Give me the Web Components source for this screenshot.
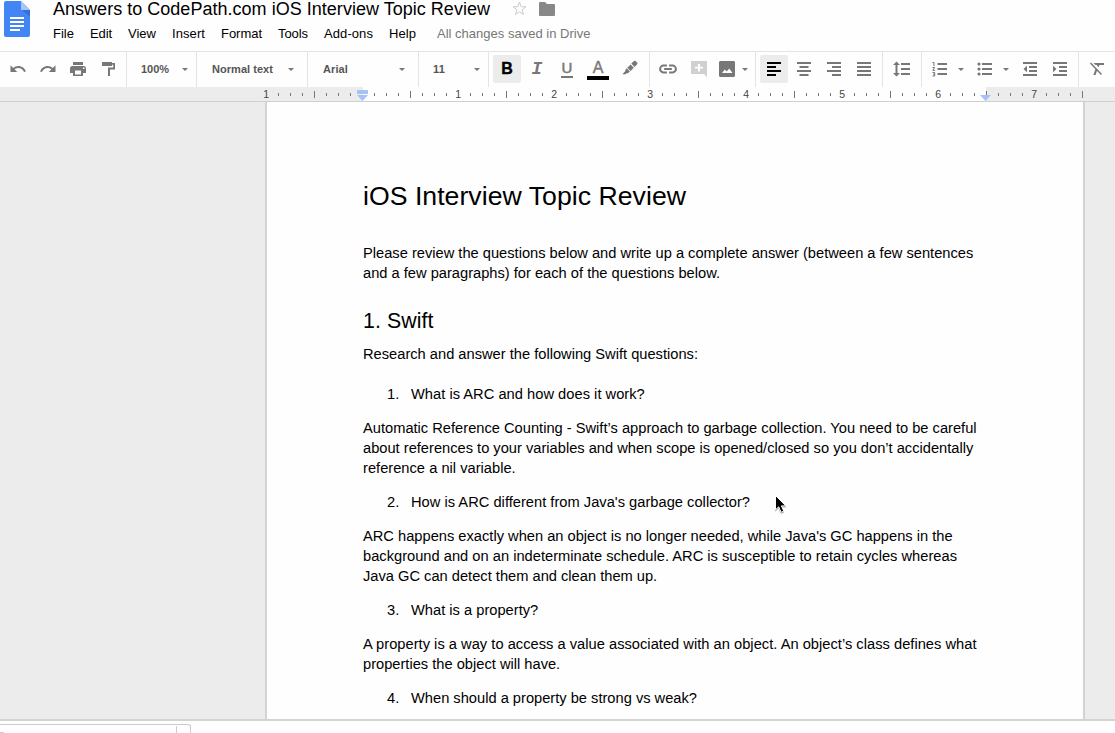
<!DOCTYPE html>
<html lang="en">
<head>
<meta charset="utf-8">
<title>Answers to CodePath.com iOS Interview Topic Review</title>
<style>
html,body{margin:0;height:100%;overflow:hidden;background:#fefefe}
body{font-family:"Liberation Sans",Arial,sans-serif;color:#000}
</style>
</head>
<body>
<docs-app></docs-app>
<script>
const make = (name, html, setup) => customElements.define(name, class extends HTMLElement {
  connectedCallback() {
    if (this.shadowRoot) return;
    const t = document.createElement('template');
    t.innerHTML = typeof html === 'function' ? html(this) : html;
    this.attachShadow({mode: 'open'}).appendChild(t.content.cloneNode(true));
    if (setup) setup(this);
  }
});

/* A single line of text, tracked so that it spans the width in its w attribute. */
make('fit-text', '<style>:host{display:block;white-space:nowrap}span{display:inline-block}</style><span><slot></slot></span>', el => {
  const s = el.shadowRoot.querySelector('span'), w = +el.getAttribute('w');
  if (!w) return;
  const now = s.getBoundingClientRect().width;
  s.style.letterSpacing = (w - now) / el.textContent.length + 'px';
});

const glyphs = {
  undo: [24, 18, '<path d="M12.5 8c-2.65 0-5.05.99-6.9 2.6L2 7v9h9l-3.62-3.62c1.39-1.16 3.16-1.88 5.12-1.88 3.54 0 6.55 2.31 7.6 5.5l2.37-.78C21.08 11.03 17.15 8 12.5 8z"/>'],
  redo: [24, 18, '<path d="M18.4 10.6C16.55 8.99 14.15 8 11.5 8c-4.65 0-8.58 3.03-9.96 7.22L3.9 16c1.05-3.19 4.05-5.5 7.6-5.5 1.95 0 3.73.72 5.12 1.88L13 16h9V7l-3.6 3.6z"/>'],
  print: [18, 18, '<path d="M4 2h10v3H4zM3.500 6h11A2.500 2.500 0 0 1 17 8.500V13h-3v3H4v-3H1V8.500A2.500 2.500 0 0 1 3.500 6zM6 10.500V14.500h6v-4zM14 7.500v1.500h1.500V7.500z" fill-rule="evenodd"/>'],
  paint: [18, 18, '<path d="M3 2h10v1h3v6.500h-5V16H9V7.500h5.200V4.800H13V6H3z"/>'],
  link: [18, 18, '<path d="M8 5.900H4.900a3.100 3.100 0 0 0 0 6.200H8M10 5.900h3.100a3.100 3.100 0 0 1 0 6.200H10M5.500 9h7" fill="none" stroke="currentColor" stroke-width="1.800"/>'],
  marker: [18, 18, '<path d="M10.300 3.600L13 1q.8-.7 1.600 0l1.600 1.700q.6.800 0 1.500l-2.700 2.700zM9.600 4.400l3.200 3.300-3.300 3.300-3.200-3.300zM5.700 8.300l3.200 3.200-2 1.800H5.500l-.9.900H1.400l3-3.100V9.700z"/>'],
  comment: [18, 18, '<path fill-rule="evenodd" d="M1 1h16v16l-3-3H1zM8 4v2.700H5v1.800h3v3h2v-3h3V6.700h-3V4z"/>'],
  image: [18, 18, '<path fill-rule="evenodd" d="M2 1h14l1 1v14l-1 1H2l-1-1V2zM4 13h10.500l-3.300-4.500-2.500 3-1.900-2.100z"/>'],
  left: [18, 18, '<path d="M2 2h14v2H2zM2 6h9v2H2zM2 10h14v2H2zM2 14h9v2H2z"/>'],
  center: [18, 18, '<path d="M2 2h14v2H2zM4.500 6h9v2h-9zM2 10h14v2H2zM4.500 14h9v2h-9z"/>'],
  right: [18, 18, '<path d="M2 2h14v2H2zM7 6h9v2H7zM2 10h14v2H2zM7 14h9v2H7z"/>'],
  justify: [18, 18, '<path d="M2 2h14v2H2zM2 6h14v2H2zM2 10h14v2H2zM2 14h14v2H2z"/>'],
  spacing: [18, 18, '<path d="M8 3h9v2H8zM8 8h9v2H8zM8 13h9v2H8zM3.500 1.500L7 5H4.500v8H7l-3.500 3.500L0 13h2.500V5H0z"/>'],
  ordered: [18, 18, '<path d="M6.500 3H16v2H6.500zM6.500 8H16v2H6.500zM6.500 13H16v2H6.500z"/><path d="M1.500 2.500H3V6M1.500 7.500h2.200L1.800 10.400h2.400M1.500 12.500h2.200v3.500H1.500M2 14.200h1.700" fill="none" stroke="currentColor"/>'],
  bullets: [18, 18, '<path d="M7 3h10v2H7zM7 8h10v2H7zM7 13h10v2H7z"/><circle cx="4" cy="4" r="1.600"/><circle cx="4" cy="9" r="1.600"/><circle cx="4" cy="14" r="1.600"/>'],
  outdent: [18, 18, '<path d="M2 2h14v2H2zM8 6h8v2H8zM8 10h8v2H8zM2 14h14v2H2zM6 5.700v6.600L2.500 9z"/>'],
  indent: [18, 18, '<path d="M2 2h14v2H2zM8 6h8v2H8zM8 10h8v2H8zM2 14h14v2H2zM2 5.700v6.600L5.500 9z"/>'],
  clear: [18, 18, '<path d="M5.500 3H16v2h-4.500l-1 2.200L9 5.700l.3-.7H7.500zM7.700 8.500l1.600 1.600L7.500 15H5.300z"/><path d="M2.500 3l11 11.500" fill="none" stroke="currentColor" stroke-width="1.500"/>']
};
make('tb-icon', el => {
  const [box, size, body] = glyphs[el.getAttribute('name')];
  return `<style>:host{display:block;width:${size}px;height:${size}px}svg{display:block}</style><svg width="${size}" height="${size}" viewBox="0 0 ${box} ${box}" fill="currentColor">${body}</svg>`;
});
make('tb-arrow', '<style>:host{display:block;width:6px;height:3px;margin-top:1px;background:#777;clip-path:polygon(0 0,100% 0,50% 100%)}</style>');
make('tb-button', `<style>
:host{display:flex;align-items:center;justify-content:center;width:28px;height:28px;margin:0 1px;border-radius:2px;color:#777;flex:none;box-sizing:border-box}
:host([on]){background:#ececec;color:#000}:host([faint]){color:#d0d0d0}</style><slot></slot>`);
make('tb-group', `<style>
:host{display:flex;align-items:center;height:35px;padding-bottom:1px;box-sizing:border-box;border-right:1px solid #e4e4e4;flex:none}</style><slot></slot>`);
make('tb-select', `<style>
:host{display:flex;align-items:center;justify-content:space-between;flex:1;font-size:11px;font-weight:bold;color:#555}</style><slot></slot><tb-arrow></tb-arrow>`);

make('docs-toolbar', `<style>
:host{display:flex;border-top:1px solid #e4e4e4;height:35px;background:#fefefe}
tb-select{padding:0 8px 0 14px}
.i{font:italic bold 18px/20px "Liberation Mono",monospace}
.b{font:bold 16px "Liberation Sans",sans-serif;-webkit-text-stroke:.4px}
.u{font-size:15px;border-bottom:2px solid;line-height:14px;padding-bottom:1px;width:12px;text-align:center;margin-top:1px;-webkit-text-stroke:.5px}
.a{font-size:16px;border-bottom:4px solid #000;line-height:15px;width:22px;text-align:center;padding-bottom:1px;margin-top:2px;-webkit-text-stroke:.4px}
</style>
<tb-group style="width:127px;padding-left:3px"><tb-button><tb-icon name="undo"></tb-icon></tb-button><tb-button><tb-icon name="redo"></tb-icon></tb-button><tb-button><tb-icon name="print"></tb-icon></tb-button><tb-button><tb-icon name="paint"></tb-icon></tb-button></tb-group>
<tb-group style="width:70px"><tb-select><fit-text w="28">100%</fit-text></tb-select></tb-group>
<tb-group style="width:111px"><tb-select style="padding-left:15px;padding-right:13px"><fit-text w="61">Normal text</fit-text></tb-select></tb-group>
<tb-group style="width:111px"><tb-select style="padding-left:15px;padding-right:13px"><fit-text w="25">Arial</fit-text></tb-select></tb-group>
<tb-group style="width:70px"><tb-select style="padding-left:14px"><fit-text w="12">11</fit-text></tb-select></tb-group>
<tb-group style="width:161px;padding-left:3px"><tb-button on><span class="b">B</span></tb-button><tb-button><span class="i">I</span></tb-button><tb-button><span class="u">U</span></tb-button><tb-button style="margin-left:2px"><span class="a">A</span></tb-button><tb-button style="margin-left:3px"><tb-icon name="marker"></tb-icon></tb-button></tb-group>
<tb-group style="width:106px;padding-left:3px"><tb-button><tb-icon name="link" style="transform:scale(1.1)"></tb-icon></tb-button><tb-button faint style="margin-left:2px"><tb-icon name="comment"></tb-icon></tb-button><tb-button style="margin-left:-1px"><tb-icon name="image"></tb-icon></tb-button><tb-arrow></tb-arrow></tb-group>
<tb-group style="width:127px;padding-left:3px"><tb-button on><tb-icon name="left"></tb-icon></tb-button><tb-button><tb-icon name="center"></tb-icon></tb-button><tb-button><tb-icon name="right"></tb-icon></tb-button><tb-button><tb-icon name="justify"></tb-icon></tb-button></tb-group>
<tb-group style="width:39px;padding-left:4px"><tb-button><tb-icon name="spacing"></tb-icon></tb-button></tb-group>
<tb-group style="width:157px;padding-left:3px"><tb-button><tb-icon name="ordered"></tb-icon></tb-button><tb-arrow style="margin-left:3px"></tb-arrow><tb-button style="margin-left:6px"><tb-icon name="bullets"></tb-icon></tb-button><tb-arrow style="margin-left:4px"></tb-arrow><tb-button style="margin-left:7px"><tb-icon name="outdent"></tb-icon></tb-button><tb-button><tb-icon name="indent"></tb-icon></tb-button></tb-group>
<tb-group style="width:36px;padding-left:3px;border:0"><tb-button><tb-icon name="clear"></tb-icon></tb-button></tb-group>`);

make('docs-ruler', () => {
  let s = '';
  for (let k = -8; k <= 60; k++) {
    const x = 362 + k * 12;
    if (k % 8 === 0) { if (k) s += `<text x="${x + .2}" y="11">${Math.abs(k / 8)}</text>`; }
    else s += k % 4 === 0 ? `<path d="M${x + .5} 4v7"/>` : `<path d="M${x + .5} 6v3"/>`;
  }
  return `<style>:host{display:block;height:14px;border-bottom:1px solid #d0d0d0;background:#ececec}svg{display:block}text{stroke:none;font:10.500px "Liberation Sans",sans-serif;fill:#444;text-anchor:middle}</style>
<svg width="1115" height="14"><path fill="#fefefe" d="M363 0h623v14H363z"/><g stroke="#777" fill="none">${s}<path d="M986.500 4v7"/></g>
<g fill="#a4c2f4"><path d="M357 3h11v4h-11zM357 8h11l-5.500 6zM980 8h11l-5.500 6z"/></g></svg>`;
});

make('docs-header', `<style>
:host{display:flex;height:51px;background:#fefefe;overflow:hidden}
.logo{width:26px;height:37px;margin:1px 23px 0 4px;flex:none}
.title{display:flex;height:24px;line-height:19px;font-size:18px}
.star{margin:0 0 0 22px}.folder{margin:2px 0 0 12px}
nav{display:flex;font-size:13px;line-height:19px}
.saved{color:#777;margin-left:21px}
nav div{display:flex;gap:16px}
</style>
<svg class="logo" viewBox="0 0 26 37"><path fill="#4285f4" d="M2 0h15l9 9v25q0 2-2 2H2q-2 0-2-2V2q0-2 2-2z"/><path fill="#a6c5fa" d="M17 0l9 9h-9z"/><path fill="#3a70d4" d="M18 9h8v7z"/><path stroke="#fff" stroke-width="2" d="M6 17h14M6 21h14M6 25h14M6 29h10"/></svg>
<div><div class="title"><fit-text w="437">Answers to CodePath.com iOS Interview Topic Review</fit-text>
<svg class="star" width="15" height="18" viewBox="0 0 15 18"><path fill="none" stroke="#ccc" d="M7.500 2l1.700 4.700 4.800.1-3.900 3 1.400 4.700-4-2.800-4 2.800 1.400-4.700-3.900-3 4.800-.1z"/></svg>
<svg class="folder" width="16" height="14" viewBox="0 0 16 14"><path fill="#888" d="M0 1q0-1 1-1h5l2 2h7q1 0 1 1v10q0 1-1 1H1q-1 0-1-1z"/></svg></div>
<nav><div><fit-text w="21">File</fit-text><fit-text w="22">Edit</fit-text><fit-text w="28">View</fit-text><fit-text w="33">Insert</fit-text><fit-text w="41">Format</fit-text><fit-text w="30">Tools</fit-text><fit-text w="49">Add-ons</fit-text><fit-text w="27">Help</fit-text></div><fit-text class="saved" w="153.500">All changes saved in Drive</fit-text></nav></div>`);

make('doc-para', '<style>:host{display:block;margin-bottom:14px}</style><slot></slot>');
make('doc-item', el => `<style>:host{display:flex;margin-bottom:14px;padding-left:24px}b{font-weight:normal;width:24px;flex:none}</style><b>${el.getAttribute('n')}.</b><slot></slot>`);
make('docs-page', `<style>
:host{display:block;box-sizing:border-box;width:820px;height:617px;margin-left:265px;padding:76px 0 0 96px;border:solid #d3d3d3;border-width:0 2px;background:#fefefe;overflow:hidden;font-size:14.667px;line-height:20px}
h1,h2{font-weight:normal;margin:0}
h1{font-size:26.667px;line-height:36px;margin-bottom:29px}
h2{font-size:21.333px;line-height:28px;margin:24px 0 9px}
</style>
<h1><fit-text w="323">iOS Interview Topic Review</fit-text></h1>
<doc-para style="margin:0"><fit-text w="610.300">Please review the questions below and write up a complete answer (between a few sentences</fit-text><fit-text w="357">and a few paragraphs) for each of the questions below.</fit-text></doc-para>
<h2><fit-text w="70.500">1. Swift</fit-text></h2>
<doc-para style="margin-bottom:20px"><fit-text w="335">Research and answer the following Swift questions:</fit-text></doc-para>
<doc-item n="1"><fit-text w="233.800">What is ARC and how does it work?</fit-text></doc-item>
<doc-para><fit-text w="613.600">Automatic Reference Counting - Swift’s approach to garbage collection. You need to be careful</fit-text><fit-text w="610.300">about references to your variables and when scope is opened/closed so you don’t accidentally</fit-text><fit-text w="152.700">reference a nil variable.</fit-text></doc-para>
<doc-item n="2"><fit-text w="339">How is ARC different from Java's garbage collector?</fit-text></doc-item>
<doc-para><fit-text w="589.600">ARC happens exactly when an object is no longer needed, while Java's GC happens in the</fit-text><fit-text w="594">background and on an indeterminate schedule. ARC is susceptible to retain cycles whereas</fit-text><fit-text w="294.200">Java GC can detect them and clean them up.</fit-text></doc-para>
<doc-item n="3"><fit-text w="127.200">What is a property?</fit-text></doc-item>
<doc-para><fit-text w="613.500">A property is a way to access a value associated with an object. An object’s class defines what</fit-text><fit-text w="197.200">properties the object will have.</fit-text></doc-para>
<doc-item n="4"><fit-text w="286">When should a property be strong vs weak?</fit-text></doc-item>`);

make('bottom-strip', `<style>
:host{display:block;height:12px;border-top:2px solid #d3d3d3;background:#fefefe;overflow:hidden}
.tab{display:flex;justify-content:space-between;align-items:flex-end;box-sizing:border-box;width:191px;height:9px;margin-top:3px;border:solid #ccc;border-width:1px 1px 0 0;border-radius:0 3px 0 0}
i{width:4px;height:1px;background:#ccc}u{width:1px;height:7px;background:#ccc;margin-right:13px}
</style><div class="tab"><i></i><u></u></div>`);
make('mouse-pointer', `<style>:host{position:absolute;left:774px;top:494px}svg{display:block;filter:drop-shadow(0 1px .7px #0006)}</style>
<svg width="13" height="20" viewBox="0 0 13 20"><path stroke="#fff" d="M1.500 1.500v14.300l3.200-3 2.400 5.500 2.700-1.200-2.400-5.200h4.400z"/></svg>`);
make('docs-app', `<style>:host{display:block;width:1115px;height:733px;background:#ececec;overflow:hidden;position:relative}</style>
<docs-header></docs-header><docs-toolbar></docs-toolbar><docs-ruler></docs-ruler><docs-page></docs-page><bottom-strip></bottom-strip><mouse-pointer></mouse-pointer>`);
</script>
</body>
</html>
